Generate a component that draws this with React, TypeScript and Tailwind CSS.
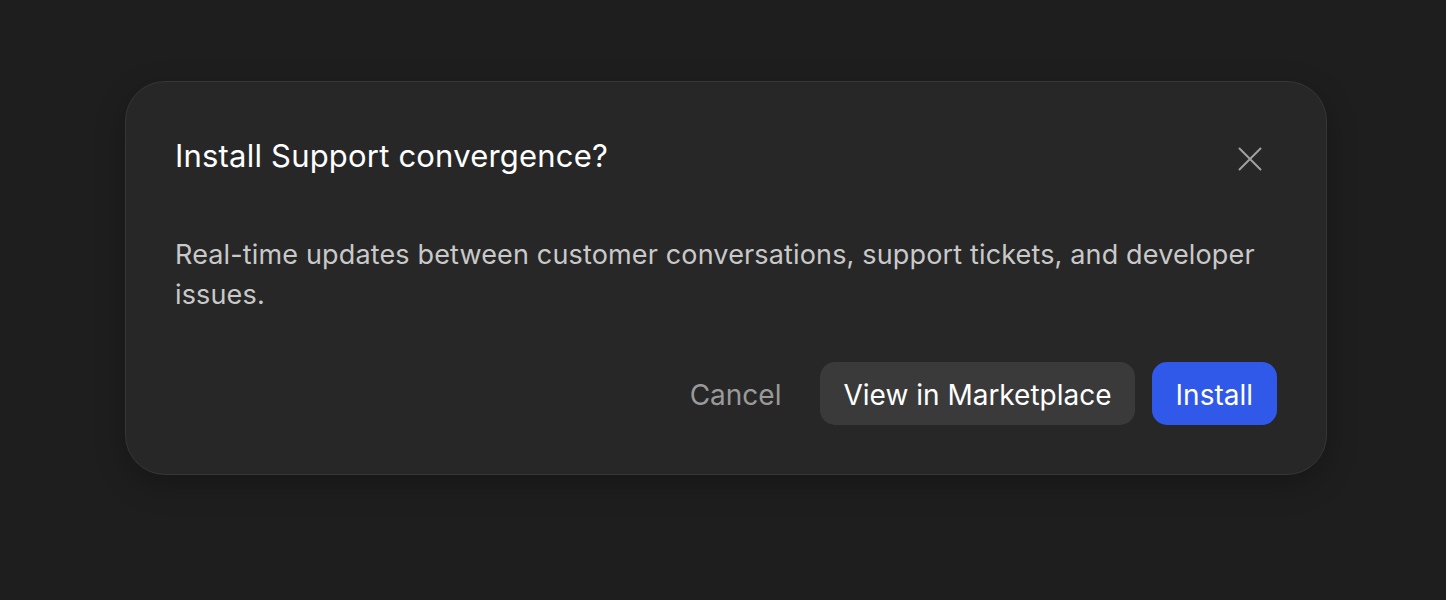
const CloseIcon = () => (
  <svg width="24" height="24" viewBox="0 0 24 24" fill="none" stroke="currentColor" strokeWidth="2" strokeLinecap="round">
    <path d="M1.5 1.5L22.5 22.5M22.5 1.5L1.5 22.5" />
  </svg>
);

const App = () => {
  return (
    <div
      className="w-full h-[600px] bg-[#1e1e1e] pt-[81px] px-[125px]"
      style={{ fontFamily: "Inter, 'Noto Sans', sans-serif" }}
    >
      <div className="w-[1202px] h-[394px] rounded-[40px] border border-[#363636] bg-[#272727] shadow-[0_10px_30px_rgba(0,0,0,0.25)] px-[49px] pt-[48px] pb-[49px] flex flex-col">
        <div className="flex items-start justify-between">
          <h2 className="text-[31px] leading-[52px] text-white font-normal tracking-[0.2px]">
            Install Support convergence?
          </h2>
          <button className="mt-[17px] mr-[15px] text-[#a0a0a0]">
            <CloseIcon />
          </button>
        </div>
        <p className="mt-[53px] text-[27px] leading-[40px] text-[#c9c9c9] tracking-[0.15px]">
          Real-time updates between customer conversations, support tickets, and developer issues.
        </p>
        <div className="mt-auto flex items-center justify-end gap-[17px]">
          <button className="pl-[24px] pr-[22px] h-[63px] pt-[3px] text-[28px] text-[#9a9a9a]">Cancel</button>
          <button className="px-[23px] h-[63px] pt-[3px] rounded-[15px] bg-[#3a3a3a] text-[28px] text-white">
            View in Marketplace
          </button>
          <button className="px-[24px] h-[63px] pt-[3px] rounded-[15px] bg-[#3059ea] text-[28px] text-white">
            Install
          </button>
        </div>
      </div>
    </div>
  );
};

export default App;
